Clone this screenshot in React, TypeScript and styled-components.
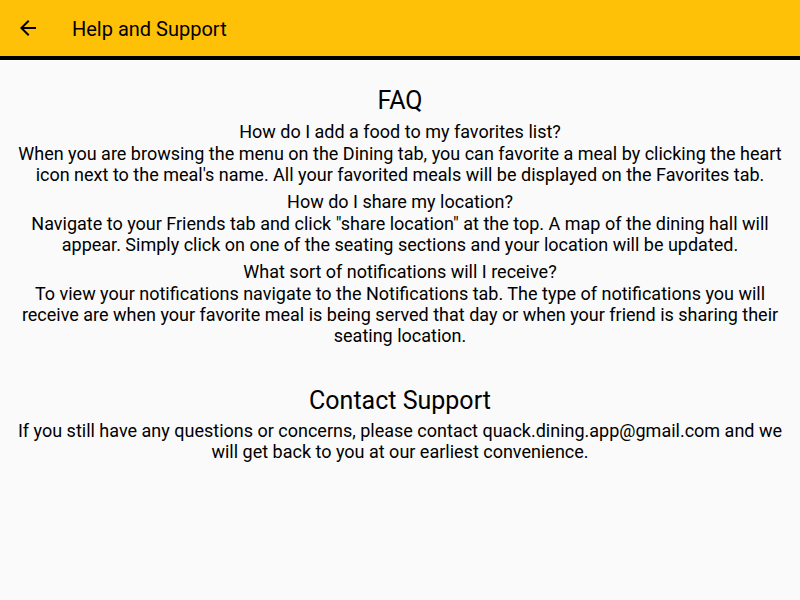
import React from "react";
import styled, { createGlobalStyle } from "styled-components";

const Global = createGlobalStyle`
  html, body { margin: 0; padding: 0; background: #fafafa; }
  body { font-family: Roboto, "Noto Sans", sans-serif; color: #000; }
`;

const Page = styled.div`
  display: flex;
  flex-direction: column;
  min-height: 600px;
  background: #fafafa;
`;

const AppBar = styled.header`
  height: 56px;
  background: #ffc107;
  border-bottom: 4px solid #000;
  display: flex;
  align-items: center;
  padding: 0 16px;
  gap: 32px;
`;

const BackButton = styled.button`
  width: 24px;
  height: 24px;
  padding: 0;
  border: none;
  background: transparent;
  display: flex;
  align-items: center;
  justify-content: center;
  color: #000;
  cursor: pointer;
`;

const Title = styled.h1`
  margin: 2px 0 0;
  font-size: 20px;
  font-weight: 400;
  line-height: normal;
`;

const Content = styled.main`
  display: flex;
  flex-direction: column;
  align-items: center;
  text-align: center;
  padding: 26px 16px 0;
`;

const Section = styled.section<{ $gap?: number }>`
  display: flex;
  flex-direction: column;
  align-items: center;
  margin-bottom: ${(p) => p.$gap ?? 0}px;
`;

const Heading = styled.h2<{ $space?: number }>`
  margin: 0 0 ${(p) => p.$space ?? 0}px;
  font-size: 25px;
  font-weight: 400;
  line-height: normal;
`;

const Question = styled.h3`
  margin: 6px 0 1px;
  font-size: 18px;
  font-weight: 400;
  line-height: normal;
`;

const Answer = styled.p`
  margin: 0;
  font-size: 18px;
  line-height: normal;
`;

const faqs = [
  {
    q: "How do I add a food to my favorites list?",
    a: "When you are browsing the menu on the Dining tab, you can favorite a meal by clicking the heart icon next to the meal's name. All your favorited meals will be displayed on the Favorites tab.",
  },
  {
    q: "How do I share my location?",
    a: 'Navigate to your Friends tab and click "share location" at the top. A map of the dining hall will appear. Simply click on one of the seating sections and your location will be updated.',
  },
  {
    q: "What sort of notifications will I receive?",
    a: "To view your notifications navigate to the Notifications tab. The type of notifications you will receive are when your favorite meal is being served that day or when your friend is sharing their seating location.",
  },
];

export default function App() {
  return (
    <Page>
      <Global />
      <AppBar>
        <BackButton aria-label="back">
          <svg width="24" height="24" viewBox="0 0 24 24">
            <path d="M20 11H7.83l5.59-5.59L12 4l-8 8 8 8 1.41-1.41L7.83 13H20v-2z" fill="#000" />
          </svg>
        </BackButton>
        <Title>Help and Support</Title>
      </AppBar>
      <Content>
        <Section $gap={40}>
          <Heading>FAQ</Heading>
          {faqs.map((f) => (
            <React.Fragment key={f.q}>
              <Question>{f.q}</Question>
              <Answer>{f.a}</Answer>
            </React.Fragment>
          ))}
        </Section>
        <Section>
          <Heading $space={5}>Contact Support</Heading>
          <Answer>
            If you still have any questions or concerns, please contact quack.dining.app@gmail.com and we will get back to you at our earliest convenience.
          </Answer>
        </Section>
      </Content>
    </Page>
  );
}
